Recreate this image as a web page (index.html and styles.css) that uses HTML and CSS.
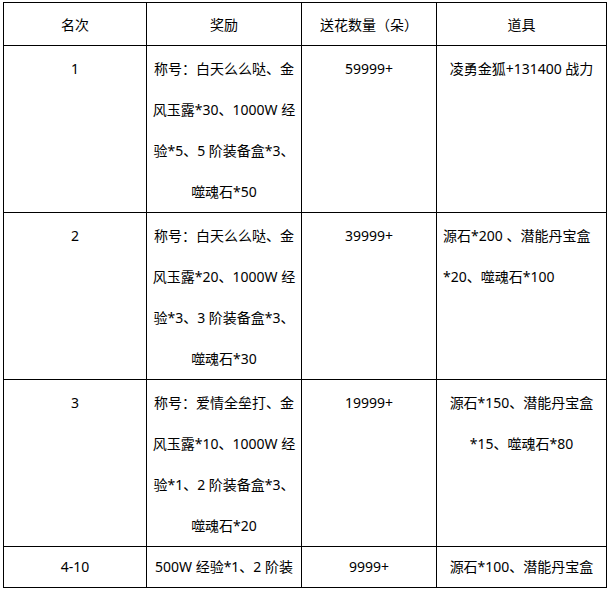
FILE: index.html
```html
<!DOCTYPE html>
<html lang="zh-CN">
<head>
<meta charset="utf-8">
<title>奖励表</title>
<link rel="stylesheet" href="styles.css">
</head>
<body>
<table class="rank-table">
  <colgroup>
    <col class="c1"><col class="c2"><col class="c3"><col class="c4">
  </colgroup>
  <thead>
    <tr class="head-row">
      <th>名次</th>
      <th>奖励</th>
      <th>送花数量<span class="pc">（</span>朵<span class="pc">）</span></th>
      <th>道具</th>
    </tr>
  </thead>
  <tbody>
    <tr class="data-row r1">
      <td>1</td>
      <td>称号<span class="pc">：</span>白天么么哒、金<br>风玉露*30、1000W 经<br>验*5、5 阶装备盒*3、<br>噬魂石*50</td>
      <td>59999+</td>
      <td>凌勇金狐+131400 战力</td>
    </tr>
    <tr class="data-row r2">
      <td>2</td>
      <td>称号<span class="pc">：</span>白天么么哒、金<br>风玉露*20、1000W 经<br>验*3、3 阶装备盒*3、<br>噬魂石*30</td>
      <td>39999+</td>
      <td class="left">源石*200 、潜能丹宝盒<br>*20、噬魂石*100</td>
    </tr>
    <tr class="data-row r3">
      <td>3</td>
      <td>称号<span class="pc">：</span>爱情全垒打、金<br>风玉露*10、1000W 经<br>验*1、2 阶装备盒*3、<br>噬魂石*20</td>
      <td>19999+</td>
      <td>源石*150、潜能丹宝盒<br>*15、噬魂石*80</td>
    </tr>
    <tr class="data-row r4">
      <td>4-10</td>
      <td>500W 经验*1、2 阶装</td>
      <td>9999+</td>
      <td>源石*100、潜能丹宝盒</td>
    </tr>
  </tbody>
</table>
</body>
</html>
```

FILE: styles.css
```css
html, body {
  margin: 0;
  padding: 0;
  background: #ffffff;
}

body {
  padding: 2px 0 0 3px;
  font-family: "Noto Sans", "Noto Sans CJK SC", sans-serif;
  font-size: 14px;
  color: #000000;
}

.rank-table {
  border-collapse: collapse;
  table-layout: fixed;
  width: 603px;
}

.c1 { width: 143px; }
.c2 { width: 155px; }
.c3 { width: 135px; }
.c4 { width: 170px; }

.rank-table th,
.rank-table td {
  border: 1px solid #000000;
  text-align: center;
  font-weight: normal;
  padding: 0 5px;
  white-space: nowrap;
  overflow: hidden;
}

.pc {
  font-family: "Noto Sans CJK TC", "Noto Sans CJK SC", sans-serif;
}

.head-row th {
  height: 40px;
  line-height: 40px;
  vertical-align: middle;
  padding-top: 1px;
}

.data-row td {
  vertical-align: top;
  line-height: 41px;
  padding-top: 2px;
  padding-bottom: 0;
}

.r1 td { height: 164px; }
.r2 td { height: 163px; }
.r3 td { height: 164px; }

.r4 td {
  height: 38px;
  line-height: 40px;
  padding-top: 0;
}

.data-row td.left {
  text-align: left;
  padding-left: 6px;
}
```
